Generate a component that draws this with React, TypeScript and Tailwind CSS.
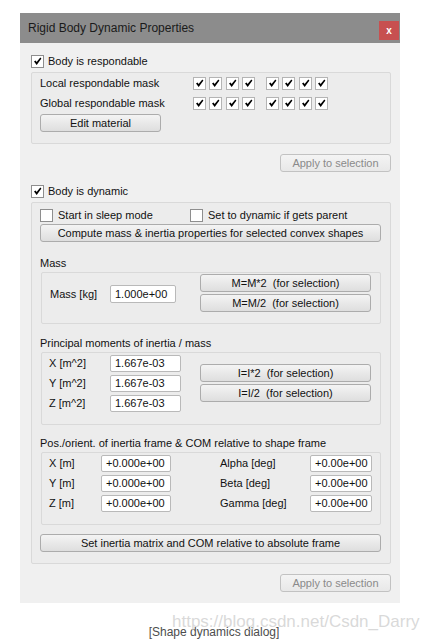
import React from 'react';

const maskGaps = ['', 'ml-[3px]', 'ml-[4px]', 'ml-[3px]', 'ml-[11px]', 'ml-[3px]', 'ml-[4px]', 'ml-[3px]'];

function Check({ checked, light }: { checked?: boolean; light?: boolean }) {
  return (
    <span
      className={`flex h-[13px] w-[13px] shrink-0 items-center justify-center border bg-white ${
        light ? 'border-[#b4b4b4]' : 'border-[#8e8e8e]'
      }`}
    >
      {checked && (
        <svg width="9" height="9" viewBox="0 0 9 9">
          <polygon points="1,4.6 2.6,3.4 3.6,5 7.3,0.6 8.4,1.6 3.7,8 " fill="#000" />
        </svg>
      )}
    </span>
  );
}

function Btn({ children, w, disabled, className = '' }: { children: React.ReactNode; w: string; disabled?: boolean; className?: string }) {
  return (
    <div
      className={`flex h-[18px] items-center justify-center rounded-[3px] border bg-gradient-to-b ${w} ${className} ${
        disabled
          ? 'border-[#c2c2c2] from-[#f4f4f4] to-[#e8e8e8] text-[#8a8a8a]'
          : 'border-[#acacac] from-[#f4f4f4] to-[#dedede] text-[#111]'
      }`}
    >
      {children}
    </div>
  );
}

function Field({ value, w }: { value: string; w: string }) {
  return (
    <div className={`flex h-[17px] items-center rounded-[2px] border border-[#b9b9b9] bg-white pl-[4px] text-[#111] ${w}`}>
      {value}
    </div>
  );
}

function Group({ className = '', children }: { className?: string; children: React.ReactNode }) {
  return <div className={`rounded-[2px] border border-[#d9d9d9] bg-[#ececec] ${className}`}>{children}</div>;
}

export default function App() {
  const inertia = ['X [m^2]', 'Y [m^2]', 'Z [m^2]'];
  const pos = [
    ['X [m]', 'Alpha [deg]'],
    ['Y [m]', 'Beta [deg]'],
    ['Z [m]', 'Gamma [deg]'],
  ];

  return (
    <div className="relative h-[641px] w-[423px] overflow-hidden bg-white font-['Liberation_Sans',Arial,sans-serif] text-[11px] leading-[13px] text-[#111]">
      <div className="ml-[20px] mt-[13px] w-[380px]">
        {/* title bar */}
        <div className="flex h-[30px] items-start bg-[#8c8c8c]">
          <span className="ml-[8px] mt-[8px] text-[12px] leading-[14px] text-[#1a1a1a]">Rigid Body Dynamic Properties</span>
          <div className="ml-auto mr-[1px] mt-[8px] flex h-[19px] w-[20px] items-center justify-center bg-[#c75050] text-[10px] font-bold leading-none text-white">
            x
          </div>
        </div>

        {/* body */}
        <div className="flex h-[560px] flex-col bg-[#f0f0f0] pl-[11px] pr-[9px]">
          <div className="mt-[12px] flex h-[13px] items-center gap-[4px]">
            <Check checked />
            <span>Body is respondable</span>
          </div>

          <Group className="mt-[4px] h-[72px] pl-[8px] pt-[4px]">
            {['Local respondable mask', 'Global respondable mask'].map((label, r) => (
              <div key={label} className={`flex h-[13px] items-center ${r ? 'mt-[7px]' : ''}`}>
                <span className="w-[153px]">{label}</span>
                {maskGaps.map((g, i) => (
                  <span key={i} className={g}>
                    <Check checked light />
                  </span>
                ))}
              </div>
            ))}
            <Btn w="w-[121px]" className="mt-[4px]">Edit material</Btn>
          </Group>

          <Btn w="w-[111px]" disabled className="mt-[10px] self-end">Apply to selection</Btn>

          <div className="mt-[13px] flex h-[13px] items-center gap-[4px]">
            <Check checked />
            <span>Body is dynamic</span>
          </div>

          <Group className="mt-[4px] flex h-[362px] flex-col pl-[8px] pt-[6px]">
            <div className="flex h-[13px] items-center">
              <div className="flex w-[150px] items-center gap-[5px]">
                <Check />
                <span>Start in sleep mode</span>
              </div>
              <div className="flex items-center gap-[5px]">
                <Check />
                <span>Set to dynamic if gets parent</span>
              </div>
            </div>
            <Btn w="w-[341px]" className="mt-[2px]">Compute mass &amp; inertia properties for selected convex shapes</Btn>

            <div className="mt-[15px] h-[13px]">Mass</div>
            <Group className="ml-[1px] mt-[2px] flex h-[52px] w-[340px] items-start pl-[8px]">
              <div className="mt-[12px] flex h-[18px] items-center">
                <span className="w-[60px]">Mass [kg]</span>
                <div className="flex h-[18px] w-[66px] items-center rounded-[2px] border border-[#b9b9b9] bg-white pl-[4px]">1.000e+00</div>
              </div>
              <div className="ml-[24px] mt-[1px] flex flex-col gap-[2px]">
                <Btn w="w-[171px]">M=M*2&nbsp;&nbsp;(for selection)</Btn>
                <Btn w="w-[171px]">M=M/2&nbsp;&nbsp;(for selection)</Btn>
              </div>
            </Group>

            <div className="mt-[13px] h-[13px]">Principal moments of inertia / mass</div>
            <Group className="ml-[1px] mt-[2px] flex h-[73px] w-[340px] items-start pl-[7px]">
              <div className="mt-[2px] flex flex-col gap-[3px]">
                {inertia.map((l) => (
                  <div key={l} className="flex items-center">
                    <span className="w-[61px]">{l}</span>
                    <Field value="1.667e-03" w="w-[71px]" />
                  </div>
                ))}
              </div>
              <div className="ml-[19px] mt-[11px] flex flex-col gap-[2px]">
                <Btn w="w-[171px]">I=I*2&nbsp;&nbsp;(for selection)</Btn>
                <Btn w="w-[171px]">I=I/2&nbsp;&nbsp;(for selection)</Btn>
              </div>
            </Group>

            <div className="mt-[12px] h-[13px]">Pos./orient. of inertia frame &amp; COM relative to shape frame</div>
            <Group className="ml-[1px] mt-[2px] flex h-[73px] w-[340px] flex-col gap-[3px] pl-[7px] pt-[2px]">
              {pos.map(([a, b]) => (
                <div key={a} className="flex items-center">
                  <span className="w-[52px]">{a}</span>
                  <Field value="+0.000e+00" w="w-[70px]" />
                  <span className="ml-[49px] w-[90px]">{b}</span>
                  <Field value="+0.00e+00" w="w-[62px]" />
                </div>
              ))}
            </Group>

            <Btn w="w-[341px]" className="mt-[9px]">Set inertia matrix and COM relative to absolute frame</Btn>
          </Group>

          <Btn w="w-[111px]" disabled className="mt-[10px] self-end">Apply to selection</Btn>
        </div>
      </div>

      <div className="mt-[22px] pl-[5px] text-center text-[12px] leading-[14px] text-[#4d4d4d]">[Shape dynamics dialog]</div>
      <div className="absolute left-[172px] top-[612px] whitespace-nowrap text-[17px] leading-[20px] text-[#cfcfcf]/80">
        https://blog.csdn.net/Csdn_Darry
      </div>
    </div>
  );
}
